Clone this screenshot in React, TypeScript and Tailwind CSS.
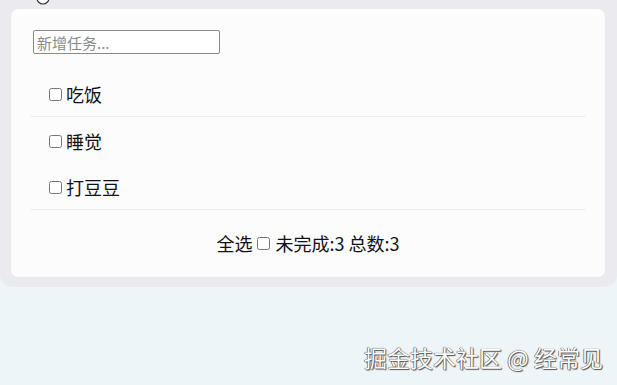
import React from "react";

const font = { fontFamily: '"Noto Sans CJK SC", "Noto Sans", sans-serif' };

export default function App() {
  const items = ["吃饭", "睡觉", "打豆豆"];
  return (
    <div className="relative flex h-[385px] w-[617px] flex-col overflow-hidden bg-[#eef5f8]" style={font}>
      <div className="rounded-b-[12px] bg-[#ebebef] pb-[10px] pl-[11px] pr-[12px] pt-[9px]">
        <div className="rounded-[7px] bg-[#fcfcfc] px-[19px] pt-[21px] shadow-[0_0_2px_rgba(0,0,0,0.04)]">
          <input
            className="ml-[3px] block h-[24px] w-[187px] rounded-[2px] border border-[#8a8a8a] bg-white px-[3px] text-[15px] text-[#222] outline-none placeholder:text-[#8a8a8a]"
            placeholder="新增任务..."
          />
          <ul className="mt-[17px] border-b border-[#ededed]">
            {items.map((t, i) => (
              <li
                key={t}
                className={`flex h-[46px] items-center pl-[15px] pt-[2px] text-[18px] text-[#111] ${i === 0 ? "border-b border-[#ededed]" : ""}`}
              >
                <input type="checkbox" className="m-0 ml-[4px] mr-[4px] h-[13px] w-[13px]" />
                <span>{t}</span>
              </li>
            ))}
          </ul>
          <div className="flex h-[67px] items-center justify-center text-[18px] text-[#111]">
            <span>全选</span>
            <input type="checkbox" className="ml-[5px] mr-[5px] h-[13px] w-[13px]" />
            <span>未完成:3 总数:3</span>
          </div>
        </div>
      </div>
      <div className="flex flex-1 items-end justify-end pb-[16px] pr-[14px]">
        <span
          className="text-[23px] leading-none text-white"
          style={{ textShadow: "0 0 1px #333, 1px 1px 1px #555, -0.5px -0.5px 0.5px #666" }}
        >
          掘金技术社区 @ 经常见
        </span>
      </div>
      <svg className="absolute left-[36px] top-[-9px]" width="14" height="14" viewBox="0 0 14 14">
        <circle cx="7" cy="7" r="6" fill="white" stroke="#333" strokeWidth="1.2" />
      </svg>
    </div>
  );
}
